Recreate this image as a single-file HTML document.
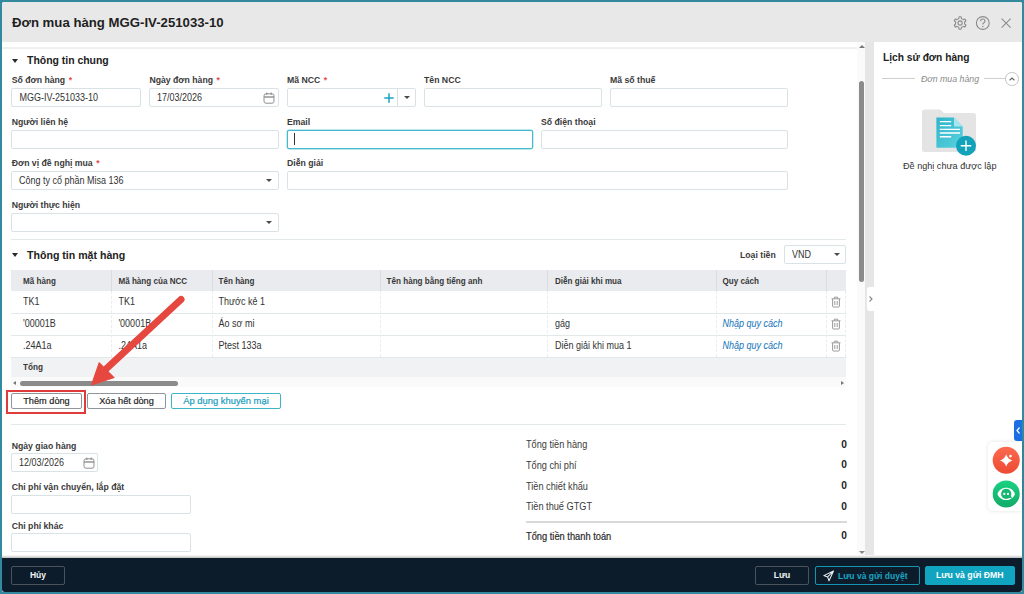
<!DOCTYPE html>
<html><head><meta charset="utf-8">
<style>
*{box-sizing:border-box;margin:0;padding:0}
html,body{width:1024px;height:594px;overflow:hidden;background:#338a9f;font-family:"Liberation Sans",sans-serif;color:#262626;position:relative}
.a{position:absolute}
.t{position:absolute;white-space:nowrap;line-height:14px}
</style></head><body>
<div class="a" style="left:2px;top:2px;width:1020px;height:590px;background:#fff;border-radius:2px"></div>
<div class="a" style="left:2px;top:2px;width:1020px;height:40px;background:#e8e8e8;border-radius:2px 2px 0 0"></div>
<div class="t" style="left:12px;top:15.73px;font-size:13.2px;font-weight:bold;color:#1f1f1f;font-style:normal;">Đơn mua hàng MGG-IV-251033-10</div>
<svg class="a" style="left:0;top:0" width="1024" height="42" viewBox="0 0 1024 42">
<g fill="none" stroke="#8c8c8c" stroke-width="1.1" stroke-linejoin="round">
<path d="M958.74,18.61 L959.10,16.78 L961.10,16.78 L961.46,18.61 L963.23,19.63 L964.98,19.02 L965.99,20.76 L964.59,21.98 L964.59,24.02 L965.99,25.24 L964.98,26.98 L963.23,26.37 L961.46,27.39 L961.10,29.22 L959.10,29.22 L958.74,27.39 L956.97,26.37 L955.22,26.98 L954.21,25.24 L955.61,24.02 L955.61,21.98 L954.21,20.76 L955.22,19.02 L956.97,19.63Z"/>
<circle cx="960.1" cy="23" r="2.1"/>
<circle cx="982.8" cy="23" r="6.4"/>
<path d="M980.6 21.2Q980.6 19 982.8 19Q985 19 985 21Q985 22.3 983.6 23Q982.8 23.5 982.8 24.6"/>
<path d="M1001.6 18.6L1010.6 27.6M1010.6 18.6L1001.6 27.6"/>
</g><circle cx="982.8" cy="26.6" r="0.75" fill="#8c8c8c"/></svg>
<div class="a" style="left:2px;top:47px;width:856px;height:2px;background:#edf1f3"></div>
<div class="a" style="left:865px;top:42px;width:9px;height:516px;background:#e6e6e6"></div>
<div class="a" style="left:857px;top:42px;width:8px;height:516px;background:#fafafa"></div>
<div class="a" style="left:859px;top:81px;width:5px;height:201px;background:#8b8b8b;border-radius:3px"></div>
<div class="a" style="left:859px;top:45px;width:0;height:0;border-left:3px solid transparent;border-right:3px solid transparent;border-bottom:3px solid #777"></div>
<div class="a" style="left:859px;top:551px;width:0;height:0;border-left:3px solid transparent;border-right:3px solid transparent;border-top:3px solid #888"></div>
<div class="a" style="left:12px;top:59px;width:0;height:0;border-left:3.5px solid transparent;border-right:3.5px solid transparent;border-top:4.5px solid #2a2a2a"></div>
<div class="t" style="left:27px;top:53.58px;font-size:10.45px;font-weight:bold;color:#222;font-style:normal;">Thông tin chung</div>
<div class="t" style="left:11.7px;top:72.99px;font-size:8.7px;font-weight:bold;color:#3a3a3a;font-style:normal;transform:scaleY(1.07);transform-origin:0 10.01px;">Số đơn hàng<span style="color:#e5484d;margin-left:3.5px">*</span></div>
<div class="a" style="left:11px;top:88px;width:130px;height:19px;border:1px solid #d9e2e5;border-radius:2px;background:#fff;"></div>
<div class="t" style="left:19.5px;top:91.28px;font-size:9px;font-weight:normal;color:#333;font-style:normal;transform:scaleY(1.13);transform-origin:0 10.12px;">MGG-IV-251033-10</div>
<div class="t" style="left:149.4px;top:72.99px;font-size:8.7px;font-weight:bold;color:#3a3a3a;font-style:normal;transform:scaleY(1.07);transform-origin:0 10.01px;">Ngày đơn hàng<span style="color:#e5484d;margin-left:3.5px">*</span></div>
<div class="a" style="left:149px;top:88px;width:130px;height:19px;border:1px solid #d9e2e5;border-radius:2px;background:#fff;"></div>
<div class="t" style="left:157px;top:91.28px;font-size:9px;font-weight:normal;color:#333;font-style:normal;transform:scaleY(1.13);transform-origin:0 10.12px;">17/03/2026</div>
<svg class="a" style="left:263px;top:91.5px" width="12" height="12" viewBox="0 0 12 12"><rect x="1" y="1.8" width="10" height="9.4" rx="2" fill="none" stroke="#8f8f8f" stroke-width="1"/><line x1="1" y1="5" x2="11" y2="5" stroke="#8f8f8f" stroke-width="1.4"/><line x1="3.8" y1="0.5" x2="3.8" y2="3" stroke="#8a8a8a" stroke-width="1"/><line x1="8.2" y1="0.5" x2="8.2" y2="3" stroke="#8a8a8a" stroke-width="1"/></svg>
<div class="t" style="left:287px;top:72.99px;font-size:8.7px;font-weight:bold;color:#3a3a3a;font-style:normal;transform:scaleY(1.07);transform-origin:0 10.01px;">Mã NCC<span style="color:#e5484d;margin-left:3.5px">*</span></div>
<div class="a" style="left:287px;top:88px;width:129px;height:19px;border:1px solid #d9e2e5;border-radius:2px;background:#fff;"></div>
<div class="a" style="left:397px;top:89px;width:1px;height:17px;background:#d6dfe2"></div>
<svg class="a" style="left:383px;top:92px" width="12" height="12" viewBox="0 0 12 12"><path d="M6 1.3V10.7M1.3 6H10.7" stroke="#1aa3c0" stroke-width="1.5"/></svg>
<div class="a" style="left:403.5px;top:96.0px;width:0;height:0;border-left:3px solid transparent;border-right:3px solid transparent;border-top:3.5px solid #4a4a4a"></div>
<div class="t" style="left:424px;top:72.99px;font-size:8.7px;font-weight:bold;color:#3a3a3a;font-style:normal;transform:scaleY(1.07);transform-origin:0 10.01px;">Tên NCC</div>
<div class="a" style="left:424px;top:88px;width:178px;height:19px;border:1px solid #d9e2e5;border-radius:2px;background:#fff;"></div>
<div class="t" style="left:610px;top:72.99px;font-size:8.7px;font-weight:bold;color:#3a3a3a;font-style:normal;transform:scaleY(1.07);transform-origin:0 10.01px;">Mã số thuế</div>
<div class="a" style="left:610px;top:88px;width:178px;height:19px;border:1px solid #d9e2e5;border-radius:2px;background:#fff;"></div>
<div class="t" style="left:11.7px;top:114.59px;font-size:8.7px;font-weight:bold;color:#3a3a3a;font-style:normal;transform:scaleY(1.07);transform-origin:0 10.01px;">Người liên hệ</div>
<div class="a" style="left:11px;top:130px;width:268px;height:19px;border:1px solid #d9e2e5;border-radius:2px;background:#fff;"></div>
<div class="t" style="left:287px;top:114.59px;font-size:8.7px;font-weight:bold;color:#3a3a3a;font-style:normal;transform:scaleY(1.07);transform-origin:0 10.01px;">Email</div>
<div class="a" style="left:287px;top:130px;width:246px;height:19px;border:1px solid #45bacd;border-radius:2px;background:#fff;box-shadow:0 0 0 0.4px rgba(69,186,205,0.7)"></div>
<div class="a" style="left:294px;top:133px;width:1px;height:12px;background:#333"></div>
<div class="t" style="left:541px;top:114.59px;font-size:8.7px;font-weight:bold;color:#3a3a3a;font-style:normal;transform:scaleY(1.07);transform-origin:0 10.01px;">Số điện thoại</div>
<div class="a" style="left:541px;top:130px;width:247px;height:19px;border:1px solid #d9e2e5;border-radius:2px;background:#fff;"></div>
<div class="t" style="left:11.7px;top:156.29px;font-size:8.7px;font-weight:bold;color:#3a3a3a;font-style:normal;transform:scaleY(1.07);transform-origin:0 10.01px;">Đơn vị đề nghị mua<span style="color:#e5484d;margin-left:3.5px">*</span></div>
<div class="a" style="left:11px;top:171px;width:268px;height:19px;border:1px solid #d9e2e5;border-radius:2px;background:#fff;"></div>
<div class="t" style="left:19px;top:174.48px;font-size:9px;font-weight:normal;color:#333;font-style:normal;transform:scaleY(1.13);transform-origin:0 10.12px;">Công ty cổ phần Misa 136</div>
<div class="a" style="left:266px;top:179.0px;width:0;height:0;border-left:3px solid transparent;border-right:3px solid transparent;border-top:3.5px solid #4a4a4a"></div>
<div class="t" style="left:287px;top:156.29px;font-size:8.7px;font-weight:bold;color:#3a3a3a;font-style:normal;transform:scaleY(1.07);transform-origin:0 10.01px;">Diễn giải</div>
<div class="a" style="left:287px;top:171px;width:501px;height:19px;border:1px solid #d9e2e5;border-radius:2px;background:#fff;"></div>
<div class="t" style="left:11.7px;top:197.99px;font-size:8.7px;font-weight:bold;color:#3a3a3a;font-style:normal;transform:scaleY(1.07);transform-origin:0 10.01px;">Người thực hiện</div>
<div class="a" style="left:11px;top:213px;width:268px;height:19px;border:1px solid #d9e2e5;border-radius:2px;background:#fff;"></div>
<div class="a" style="left:266px;top:221.0px;width:0;height:0;border-left:3px solid transparent;border-right:3px solid transparent;border-top:3.5px solid #4a4a4a"></div>
<div class="a" style="left:11px;top:239px;width:835px;height:1px;background:#e3e9eb"></div>
<div class="a" style="left:12px;top:253px;width:0;height:0;border-left:3.5px solid transparent;border-right:3.5px solid transparent;border-top:4.5px solid #2a2a2a"></div>
<div class="t" style="left:27px;top:247.53px;font-size:10.6px;font-weight:bold;color:#222;font-style:normal;">Thông tin mặt hàng</div>
<div class="t" style="left:740px;top:248.29px;font-size:8.7px;font-weight:bold;color:#3a3a3a;font-style:normal;">Loại tiền</div>
<div class="a" style="left:784px;top:245px;width:62px;height:19px;border:1px solid #d9e2e5;border-radius:2px;background:#fff;"></div>
<div class="t" style="left:792px;top:248.38px;font-size:9px;font-weight:normal;color:#333;font-style:normal;transform:scaleY(1.13);transform-origin:0 10.12px;">VND</div>
<div class="a" style="left:834px;top:253.0px;width:0;height:0;border-left:3px solid transparent;border-right:3px solid transparent;border-top:3.5px solid #4a4a4a"></div>
<div class="a" style="left:11px;top:270px;width:835px;height:21px;background:#e9ebef"></div>
<div class="t" style="left:23px;top:275.19px;font-size:8.1px;font-weight:bold;color:#383838;font-style:normal;transform:scaleY(1.08);transform-origin:0 9.81px;">Mã hàng</div>
<div class="t" style="left:118.4px;top:275.19px;font-size:8.1px;font-weight:bold;color:#383838;font-style:normal;transform:scaleY(1.08);transform-origin:0 9.81px;">Mã hàng của NCC</div>
<div class="t" style="left:218.5px;top:275.19px;font-size:8.1px;font-weight:bold;color:#383838;font-style:normal;transform:scaleY(1.08);transform-origin:0 9.81px;">Tên hàng</div>
<div class="t" style="left:386.6px;top:275.19px;font-size:8.1px;font-weight:bold;color:#383838;font-style:normal;transform:scaleY(1.08);transform-origin:0 9.81px;">Tên hàng bằng tiếng anh</div>
<div class="t" style="left:555px;top:275.19px;font-size:8.1px;font-weight:bold;color:#383838;font-style:normal;transform:scaleY(1.08);transform-origin:0 9.81px;">Diễn giải khi mua</div>
<div class="t" style="left:722.5px;top:275.19px;font-size:8.1px;font-weight:bold;color:#383838;font-style:normal;transform:scaleY(1.08);transform-origin:0 9.81px;">Quy cách</div>
<div class="a" style="left:111px;top:270px;width:1px;height:21px;background:#d8dde0"></div>
<div class="a" style="left:212px;top:270px;width:1px;height:21px;background:#d8dde0"></div>
<div class="a" style="left:380px;top:270px;width:1px;height:21px;background:#d8dde0"></div>
<div class="a" style="left:547px;top:270px;width:1px;height:21px;background:#d8dde0"></div>
<div class="a" style="left:716px;top:270px;width:1px;height:21px;background:#d8dde0"></div>
<div class="a" style="left:826px;top:270px;width:1px;height:21px;background:#d8dde0"></div>
<div class="t" style="left:23px;top:295.08px;font-size:9px;font-weight:normal;color:#333;font-style:normal;transform:scaleY(1.13);transform-origin:0 10.12px;">TK1</div>
<div class="t" style="left:118.4px;top:295.08px;font-size:9px;font-weight:normal;color:#333;font-style:normal;transform:scaleY(1.13);transform-origin:0 10.12px;">TK1</div>
<div class="t" style="left:218.5px;top:295.08px;font-size:9px;font-weight:normal;color:#333;font-style:normal;transform:scaleY(1.13);transform-origin:0 10.12px;">Thước kẻ 1</div>
<div class="a" style="left:11px;top:313px;width:835px;height:1px;background:#e3e9eb"></div>
<svg class="a" style="left:830px;top:296px" width="12" height="12" viewBox="0 0 12 12"><g fill="none" stroke="#9a9a9a" stroke-width="1"><path d="M1.5 2.8H10.5"/><path d="M4.3 2.6V1.2H7.7V2.6"/><path d="M2.6 3V10.2Q2.6 11 3.4 11H8.6Q9.4 11 9.4 10.2V3"/><path d="M4.8 5V9M7.2 5V9"/></g></svg>
<div class="t" style="left:23px;top:317.08px;font-size:9px;font-weight:normal;color:#333;font-style:normal;transform:scaleY(1.13);transform-origin:0 10.12px;">'00001B</div>
<div class="t" style="left:118.4px;top:317.08px;font-size:9px;font-weight:normal;color:#333;font-style:normal;transform:scaleY(1.13);transform-origin:0 10.12px;">'00001B</div>
<div class="t" style="left:218.5px;top:317.08px;font-size:9px;font-weight:normal;color:#333;font-style:normal;transform:scaleY(1.13);transform-origin:0 10.12px;">Áo sơ mi</div>
<div class="t" style="left:555px;top:317.08px;font-size:9px;font-weight:normal;color:#333;font-style:normal;transform:scaleY(1.13);transform-origin:0 10.12px;">gág</div>
<div class="t" style="left:722.5px;top:317.08px;font-size:9px;font-weight:normal;color:#2079bd;font-style:italic;transform:scaleY(1.13);transform-origin:0 10.12px;-webkit-text-stroke:0.05px #2079bd">Nhập quy cách</div>
<div class="a" style="left:11px;top:335px;width:835px;height:1px;background:#e3e9eb"></div>
<svg class="a" style="left:830px;top:318px" width="12" height="12" viewBox="0 0 12 12"><g fill="none" stroke="#9a9a9a" stroke-width="1"><path d="M1.5 2.8H10.5"/><path d="M4.3 2.6V1.2H7.7V2.6"/><path d="M2.6 3V10.2Q2.6 11 3.4 11H8.6Q9.4 11 9.4 10.2V3"/><path d="M4.8 5V9M7.2 5V9"/></g></svg>
<div class="t" style="left:23px;top:339.08px;font-size:9px;font-weight:normal;color:#333;font-style:normal;transform:scaleY(1.13);transform-origin:0 10.12px;">.24A1a</div>
<div class="t" style="left:118.4px;top:339.08px;font-size:9px;font-weight:normal;color:#333;font-style:normal;transform:scaleY(1.13);transform-origin:0 10.12px;">.24A1a</div>
<div class="t" style="left:218.5px;top:339.08px;font-size:9px;font-weight:normal;color:#333;font-style:normal;transform:scaleY(1.13);transform-origin:0 10.12px;">Ptest 133a</div>
<div class="t" style="left:555px;top:339.08px;font-size:9px;font-weight:normal;color:#333;font-style:normal;transform:scaleY(1.13);transform-origin:0 10.12px;">Diễn giải khi mua 1</div>
<div class="t" style="left:722.5px;top:339.08px;font-size:9px;font-weight:normal;color:#2079bd;font-style:italic;transform:scaleY(1.13);transform-origin:0 10.12px;-webkit-text-stroke:0.05px #2079bd">Nhập quy cách</div>
<div class="a" style="left:11px;top:357px;width:835px;height:1px;background:#e3e9eb"></div>
<svg class="a" style="left:830px;top:340px" width="12" height="12" viewBox="0 0 12 12"><g fill="none" stroke="#9a9a9a" stroke-width="1"><path d="M1.5 2.8H10.5"/><path d="M4.3 2.6V1.2H7.7V2.6"/><path d="M2.6 3V10.2Q2.6 11 3.4 11H8.6Q9.4 11 9.4 10.2V3"/><path d="M4.8 5V9M7.2 5V9"/></g></svg>
<div class="a" style="left:111px;top:291px;width:0;height:66px;border-left:1px dashed #e8eef0"></div>
<div class="a" style="left:212px;top:291px;width:0;height:66px;border-left:1px dashed #e8eef0"></div>
<div class="a" style="left:380px;top:291px;width:0;height:66px;border-left:1px dashed #e8eef0"></div>
<div class="a" style="left:547px;top:291px;width:0;height:66px;border-left:1px dashed #e8eef0"></div>
<div class="a" style="left:716px;top:291px;width:0;height:66px;border-left:1px dashed #e8eef0"></div>
<div class="a" style="left:826px;top:291px;width:0;height:66px;border-left:1px dashed #e8eef0"></div>
<div class="a" style="left:845px;top:291px;width:0;height:66px;border-left:1px dashed #e8eef0"></div>
<div class="a" style="left:11px;top:358px;width:835px;height:19px;background:#f1f2f3"></div>
<div class="t" style="left:23px;top:360.86px;font-size:8.2px;font-weight:bold;color:#383838;font-style:normal;transform:scaleY(1.12);transform-origin:0 9.84px;">Tổng</div>
<div class="a" style="left:11px;top:377px;width:835px;height:10px;background:#fafafa"></div>
<div class="a" style="left:20px;top:381px;width:158px;height:5px;background:#8b8b8b;border-radius:3px"></div>
<div class="a" style="left:13px;top:381px;width:0;height:0;border-top:2.5px solid transparent;border-bottom:2.5px solid transparent;border-right:3px solid #777"></div>
<div class="a" style="left:841px;top:381px;width:0;height:0;border-top:2.5px solid transparent;border-bottom:2.5px solid transparent;border-left:3px solid #777"></div>
<div class="a" style="left:11px;top:393px;width:71px;height:16px;border:1px solid #8f959a;border-radius:2px;background:#fff;color:#262626;font-size:9.2px;font-weight:normal;text-align:center;line-height:14px;white-space:nowrap;-webkit-text-stroke:0.2px #262626">Thêm dòng</div>
<div class="a" style="left:87px;top:393px;width:79px;height:16px;border:1px solid #8f959a;border-radius:2px;background:#fff;color:#262626;font-size:9.2px;font-weight:normal;text-align:center;line-height:14px;white-space:nowrap;-webkit-text-stroke:0.2px #262626">Xóa hết dòng</div>
<div class="a" style="left:171px;top:393px;width:110px;height:16px;border:1px solid #3db5c9;border-radius:2px;background:#fff;color:#189dbd;font-size:9.4px;font-weight:normal;text-align:center;line-height:14px;white-space:nowrap;-webkit-text-stroke:0.2px #189dbd">Áp dụng khuyến mại</div>
<div class="a" style="left:6px;top:390px;width:80px;height:24px;border:2px solid #e03b3b"></div>
<div class="a" style="left:11px;top:424px;width:835px;height:1px;background:#e3e9eb"></div>
<div class="t" style="left:11.7px;top:438.99px;font-size:8.7px;font-weight:bold;color:#3a3a3a;font-style:normal;transform:scaleY(1.07);transform-origin:0 10.01px;">Ngày giao hàng</div>
<div class="a" style="left:11px;top:453px;width:87px;height:19px;border:1px solid #d9e2e5;border-radius:2px;background:#fff;"></div>
<div class="t" style="left:19px;top:456.28px;font-size:9px;font-weight:normal;color:#333;font-style:normal;transform:scaleY(1.13);transform-origin:0 10.12px;">12/03/2026</div>
<svg class="a" style="left:82.5px;top:457px" width="12" height="12" viewBox="0 0 12 12"><rect x="1" y="1.8" width="10" height="9.4" rx="2" fill="none" stroke="#8f8f8f" stroke-width="1"/><line x1="1" y1="5" x2="11" y2="5" stroke="#8f8f8f" stroke-width="1.4"/><line x1="3.8" y1="0.5" x2="3.8" y2="3" stroke="#8a8a8a" stroke-width="1"/><line x1="8.2" y1="0.5" x2="8.2" y2="3" stroke="#8a8a8a" stroke-width="1"/></svg>
<div class="t" style="left:11.7px;top:479.99px;font-size:8.7px;font-weight:bold;color:#3a3a3a;font-style:normal;transform:scaleY(1.07);transform-origin:0 10.01px;">Chi phí vận chuyển, lắp đặt</div>
<div class="a" style="left:11px;top:495px;width:180px;height:19px;border:1px solid #d9e2e5;border-radius:2px;background:#fff;"></div>
<div class="t" style="left:11.7px;top:518.99px;font-size:8.7px;font-weight:bold;color:#3a3a3a;font-style:normal;transform:scaleY(1.07);transform-origin:0 10.01px;">Chi phí khác</div>
<div class="a" style="left:11px;top:533px;width:180px;height:19px;border:1px solid #d9e2e5;border-radius:2px;background:#fff;"></div>
<div class="t" style="left:526px;top:438.11px;font-size:9.2px;font-weight:normal;color:#3a3a3a;font-style:normal;transform:scaleY(1.1);transform-origin:0 10.19px;">Tổng tiền hàng</div>
<div class="t" style="right:177px;text-align:right;top:437.77px;font-size:10.2px;font-weight:bold;color:#222;font-style:normal;">0</div>
<div class="t" style="left:526px;top:458.51px;font-size:9.2px;font-weight:normal;color:#3a3a3a;font-style:normal;transform:scaleY(1.1);transform-origin:0 10.19px;">Tổng chi phí</div>
<div class="t" style="right:177px;text-align:right;top:458.17px;font-size:10.2px;font-weight:bold;color:#222;font-style:normal;">0</div>
<div class="t" style="left:526px;top:479.61px;font-size:9.2px;font-weight:normal;color:#3a3a3a;font-style:normal;transform:scaleY(1.1);transform-origin:0 10.19px;">Tiền chiết khấu</div>
<div class="t" style="right:177px;text-align:right;top:479.27px;font-size:10.2px;font-weight:bold;color:#222;font-style:normal;">0</div>
<div class="t" style="left:526px;top:500.01px;font-size:9.2px;font-weight:normal;color:#3a3a3a;font-style:normal;transform:scaleY(1.1);transform-origin:0 10.19px;">Tiền thuế GTGT</div>
<div class="t" style="right:177px;text-align:right;top:499.67px;font-size:10.2px;font-weight:bold;color:#222;font-style:normal;">0</div>
<div class="a" style="left:526px;top:521px;width:321px;height:2px;background:#d9d9d9"></div>
<div class="t" style="left:526px;top:530.28px;font-size:9.3px;font-weight:normal;color:#2a2a2a;font-style:normal;transform:scaleY(1.1);transform-origin:0 10.22px;-webkit-text-stroke:0.18px #2a2a2a">Tổng tiền thanh toán</div>
<div class="t" style="right:177px;text-align:right;top:529.47px;font-size:10.2px;font-weight:bold;color:#222;font-style:normal;">0</div>
<div class="t" style="left:883px;top:50.67px;font-size:10.2px;font-weight:bold;color:#222;font-style:normal;">Lịch sử đơn hàng</div>
<div class="a" style="left:882px;top:78px;width:33px;height:1px;background:#cfcfcf"></div>
<div class="t" style="left:921px;top:71.95px;font-size:8.8px;font-weight:normal;color:#8a8a8a;font-style:italic;">Đơn mua hàng</div>
<div class="a" style="left:984px;top:78px;width:22px;height:1px;background:#cfcfcf"></div>
<div class="a" style="left:1005.3px;top:72.2px;width:13.4px;height:13.4px;border:1px solid #c4c4c4;border-radius:50%;background:#fff"></div>
<svg class="a" style="left:1008px;top:74.5px" width="8" height="8" viewBox="0 0 8 8"><path d="M1.6 5.2L4 3L6.4 5.2" fill="none" stroke="#666" stroke-width="1.2"/></svg>
<svg class="a" style="left:920px;top:107px" width="60" height="50" viewBox="0 0 60 50">
<defs><linearGradient id="dg" x1="0" y1="0" x2="1" y2="1"><stop offset="0" stop-color="#2fb4c9"/><stop offset="1" stop-color="#5ad2df"/></linearGradient></defs>
<path d="M2 5Q2 2.5 4.5 2.5H20L24 6H53.5Q56 6 56 8.5V42.5Q56 45 53.5 45H4.5Q2 45 2 42.5Z" fill="#e4e4e4"/>
<path d="M16.4 10.5H34L42.7 19.5V40.8H16.4Z" fill="url(#dg)"/>
<path d="M34 10.5V19.5H42.7Z" fill="#a6e6ee"/>
<g stroke="#fff" stroke-width="1.4"><path d="M19.8 14.6H31.2M19.8 18.6H31.2M19.8 22.4H40M19.8 26H40M19.8 29.7H31.2"/></g>
<circle cx="46" cy="38.8" r="10" fill="#12a2b9"/>
<path d="M46 33.5V44.1M40.7 38.8H51.3" stroke="#fff" stroke-width="1.4"/>
</svg>
<div class="t" style="left:903px;top:158.85px;font-size:9.1px;font-weight:normal;color:#333;font-style:normal;">Đề nghị chưa được lập</div>
<div class="a" style="left:867px;top:287px;width:9px;height:24px;background:#fff;border-radius:3px 0 0 3px"></div>
<svg class="a" style="left:868px;top:295px" width="6" height="8" viewBox="0 0 6 8"><path d="M1.5 1.5L4 4L1.5 6.5" fill="none" stroke="#888" stroke-width="1.1"/></svg>
<div class="a" style="left:1014px;top:420px;width:8px;height:21px;background:#1b6fe3;border-radius:3px 0 0 3px"></div>
<svg class="a" style="left:1015px;top:426px" width="6" height="9" viewBox="0 0 6 9"><path d="M4.5 1.5L2 4.5L4.5 7.5" fill="none" stroke="#fff" stroke-width="1.2"/></svg>
<div class="a" style="left:988px;top:442px;width:34px;height:69px;background:#fff;border-radius:5px 0 0 5px;box-shadow:0 0 4px rgba(0,0,0,0.12)"></div>
<svg class="a" style="left:992px;top:446px" width="29" height="63" viewBox="0 0 29 63">
<defs><linearGradient id="rg" x1="0" y1="0" x2="0" y2="1"><stop offset="0" stop-color="#fb6a4f"/><stop offset="1" stop-color="#ee4a33"/></linearGradient>
<linearGradient id="gg" x1="0" y1="0" x2="0" y2="1"><stop offset="0" stop-color="#1ad282"/><stop offset="1" stop-color="#12aa68"/></linearGradient></defs>
<circle cx="14.2" cy="14.2" r="13.5" fill="url(#rg)"/>
<path d="M14.2 8.2Q15.6 13 20.4 14.4Q15.6 15.8 14.2 20.6Q12.8 15.8 8 14.4Q12.8 13 14.2 8.2Z" fill="#fff"/>
<circle cx="18.5" cy="10.1" r="1.35" fill="#fff"/>
<circle cx="14.2" cy="47.9" r="13.5" fill="url(#gg)"/>
<path d="M5.4 47.9C8.5 39.8 19.9 39.8 23 47.9C19.9 56 8.5 56 5.4 47.9Z" fill="#fff"/>
<circle cx="14.2" cy="47.9" r="5.1" fill="#15b870"/>
<path d="M16.8 51.5L20.2 52.6L18.6 49.6Z" fill="#15b870"/>
<rect x="11.3" y="46.9" width="2" height="2" fill="#fff"/><rect x="15" y="46.9" width="2" height="2" fill="#fff"/>
</svg>
<div class="a" style="left:2px;top:555px;width:1020px;height:3px;background:linear-gradient(#fdfdfd,#e6e6e6 40%,#bdbdbd)"></div>
<div class="a" style="left:2px;top:558px;width:1020px;height:34px;background:#0d1c2b;border-radius:0 0 3px 3px"></div>
<div class="a" style="left:11px;top:565.5px;width:54px;height:19.5px;border:1px solid #4a535b;border-radius:2px;background:transparent;color:#f2f5f7;font-size:8.5px;font-weight:bold;text-align:center;line-height:17.5px;white-space:nowrap;">Hủy</div>
<div class="a" style="left:755px;top:565.5px;width:54px;height:19.5px;border:1px solid #4a535b;border-radius:2px;background:transparent;color:#f2f5f7;font-size:8.5px;font-weight:bold;text-align:center;line-height:17.5px;white-space:nowrap;">Lưu</div>
<div class="a" style="left:814.5px;top:565.5px;width:105.5px;height:19.5px;border:1px solid #1596b0;border-radius:2px"></div>
<div class="t" style="left:838px;top:568.85px;font-size:8.5px;font-weight:bold;color:#1ba6c3;font-style:normal;">Lưu và gửi duyệt</div>
<svg class="a" style="left:822px;top:570px" width="13" height="12" viewBox="0 0 13 12"><path d="M11.5 1L1.8 5.6L5.6 6.9L7 10.8Z M5.6 6.9L11.5 1" fill="none" stroke="#e8eef2" stroke-width="1.05" stroke-linejoin="round"/></svg>
<div class="a" style="left:925px;top:565.5px;width:89.5px;height:19.5px;border:1px solid #10a4c0;border-radius:2px;background:#10a4c0;color:#fff;font-size:8.7px;font-weight:bold;text-align:center;line-height:17.5px;white-space:nowrap;">Lưu và gửi ĐMH</div>
<svg class="a" style="left:0;top:0" width="1024" height="594" viewBox="0 0 1024 594">
<line x1="181" y1="299.5" x2="106" y2="369" stroke="#e6473f" stroke-width="7" stroke-linecap="round"/>
<path d="M91.4 385L99.2 362.6L114.2 377.6Z" fill="#e6473f" stroke="#e6473f" stroke-width="1" stroke-linejoin="round"/>
</svg>
</body></html>
